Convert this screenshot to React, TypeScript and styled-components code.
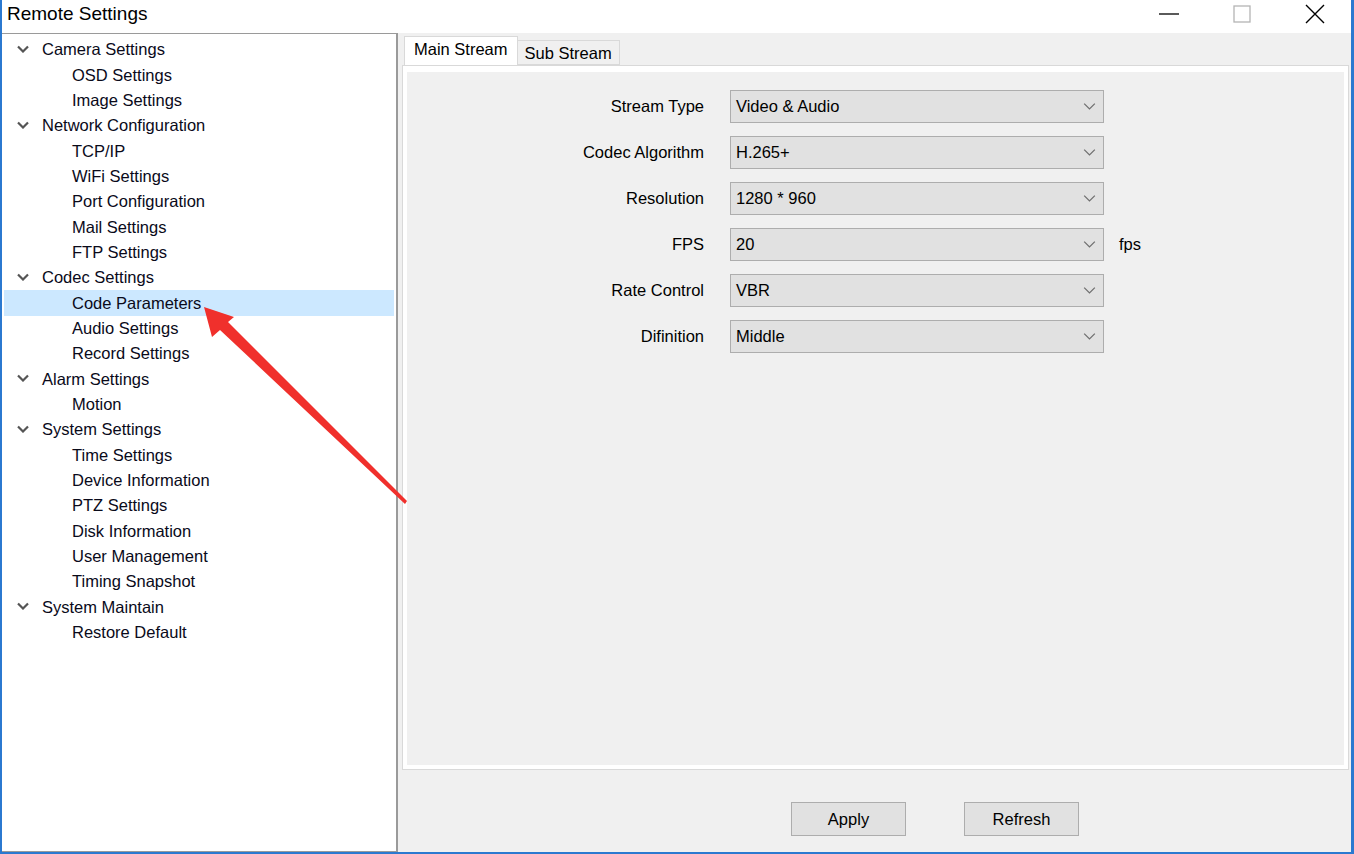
import React from 'react';
import styled, { createGlobalStyle } from 'styled-components';

const GlobalStyle = createGlobalStyle`
  html, body {
    margin: 0;
    padding: 0;
    background: #ffffff;
  }
  body {
    font-family: "Liberation Sans", Arial, sans-serif;
    color: #000;
  }
`;

type TreeNode = { label: string; children: string[] };

const tree: TreeNode[] = [
  { label: 'Camera Settings', children: ['OSD Settings', 'Image Settings'] },
  {
    label: 'Network Configuration',
    children: ['TCP/IP', 'WiFi Settings', 'Port Configuration', 'Mail Settings', 'FTP Settings'],
  },
  { label: 'Codec Settings', children: ['Code Parameters', 'Audio Settings', 'Record Settings'] },
  { label: 'Alarm Settings', children: ['Motion'] },
  {
    label: 'System Settings',
    children: [
      'Time Settings',
      'Device Information',
      'PTZ Settings',
      'Disk Information',
      'User Management',
      'Timing Snapshot',
    ],
  },
  { label: 'System Maintain', children: ['Restore Default'] },
];

const fields = [
  { label: 'Stream Type', value: 'Video & Audio' },
  { label: 'Codec Algorithm', value: 'H.265+' },
  { label: 'Resolution', value: '1280 * 960' },
  { label: 'FPS', value: '20', unit: 'fps' },
  { label: 'Rate Control', value: 'VBR' },
  { label: 'Difinition', value: 'Middle' },
];

const SELECTED = 'Code Parameters';

const Chevron = ({ color, size }: { color: string; size: number }) => (
  <svg width={size} height={size / 2 + 2} viewBox="0 0 12 8">
    <path d="M1 1.5 L6 6.5 L11 1.5" fill="none" stroke={color} strokeWidth={size > 12 ? 1.2 : 2.2} />
  </svg>
);

const App = () => {
  return (
    <>
      <GlobalStyle />
      <Window>
        <TitleBar>
          <Title>Remote Settings</Title>
          <Controls>
            <ControlButton>
              <svg width="22" height="4" viewBox="0 0 22 4">
                <line x1="1" y1="2" x2="21" y2="2" stroke="#000" strokeWidth="1.3" />
              </svg>
            </ControlButton>
            <ControlButton>
              <svg width="18" height="18" viewBox="0 0 18 18">
                <rect x="1" y="1" width="16" height="16" fill="none" stroke="#b4b4b4" strokeWidth="1.3" />
              </svg>
            </ControlButton>
            <ControlButton>
              <svg width="20" height="20" viewBox="0 0 20 20">
                <path d="M1 1 L19 19 M19 1 L1 19" stroke="#000" strokeWidth="1.4" />
              </svg>
            </ControlButton>
          </Controls>
        </TitleBar>

        <Body>
          <TreePanel>
            {tree.map((group) => (
              <React.Fragment key={group.label}>
                <TreeRow>
                  <Expander>
                    <Chevron color="#555" size={12} />
                  </Expander>
                  <TreeText>{group.label}</TreeText>
                </TreeRow>
                {group.children.map((child) => (
                  <TreeRow key={child} $selected={child === SELECTED} $child>
                    <TreeText>{child}</TreeText>
                  </TreeRow>
                ))}
              </React.Fragment>
            ))}
          </TreePanel>

          <Content>
            <TabBar>
              <Tab $active>Main Stream</Tab>
              <Tab>Sub Stream</Tab>
            </TabBar>
            <Pane>
              <PaneInner>
                <Form>
                  {fields.map((f) => (
                    <React.Fragment key={f.label}>
                      <Label>{f.label}</Label>
                      <Select>
                        <span>{f.value}</span>
                        <Chevron color="#6f6f6f" size={13} />
                      </Select>
                      <Unit>{f.unit ?? ''}</Unit>
                    </React.Fragment>
                  ))}
                </Form>
              </PaneInner>
            </Pane>
            <Footer>
              <Button>Apply</Button>
              <Button>Refresh</Button>
            </Footer>
          </Content>
        </Body>

        <Annotation viewBox="0 0 1354 854" width="1354" height="854">
          <polygon
            points="204,307 234,317 228,322 407,501 405,504 220,330 212,337"
            fill="#f0302c"
          />
        </Annotation>
      </Window>
    </>
  );
};

export default App;

const Window = styled.div`
  position: relative;
  width: 1354px;
  height: 854px;
  box-sizing: border-box;
  border-left: 2px solid #2b79d0;
  border-right: 3px solid #2b79d0;
  border-bottom: 2px solid #2b79d0;
  display: flex;
  flex-direction: column;
  overflow: hidden;
`;

const TitleBar = styled.div`
  height: 33px;
  background: #ffffff;
  display: flex;
  align-items: center;
  justify-content: space-between;
  flex-shrink: 0;
`;

const Title = styled.div`
  font-size: 19px;
  padding-left: 5px;
  padding-bottom: 5px;
  color: #000;
`;

const Controls = styled.div`
  display: flex;
  align-items: center;
  height: 100%;
  padding-right: 0;
`;

const ControlButton = styled.div`
  width: 73px;
  height: 100%;
  display: flex;
  align-items: center;
  justify-content: center;
  padding-bottom: 6px;
  box-sizing: border-box;
`;

const Body = styled.div`
  flex: 1;
  display: flex;
  background: #f0f0f0;
  min-height: 0;
`;

const TreePanel = styled.div`
  width: 396px;
  flex-shrink: 0;
  box-sizing: border-box;
  background: #ffffff;
  border-top: 1px solid #9a9a9a;
  border-right: 2px solid #9a9a9a;
  border-bottom: 1px solid #9a9a9a;
  padding: 3px 2px 0 2px;
`;

const TreeRow = styled.div<{ $child?: boolean; $selected?: boolean }>`
  height: 25.35px;
  display: flex;
  align-items: center;
  padding-left: ${(p) => (p.$child ? '68px' : '13px')};
  background: ${(p) => (p.$selected ? '#cce8ff' : 'transparent')};
  box-sizing: border-box;
`;

const Expander = styled.span`
  width: 25px;
  display: flex;
  align-items: center;
  padding-bottom: 2px;
`;

const TreeText = styled.span`
  font-size: 16.5px;
  white-space: nowrap;
  color: #0a0a1a;
`;

const Content = styled.div`
  flex: 1;
  display: flex;
  flex-direction: column;
  padding: 4px 2px 0 4px;
  min-width: 0;
`;

const TabBar = styled.div`
  display: flex;
  align-items: flex-end;
  height: 28px;
  padding-left: 2px;
  position: relative;
  z-index: 1;
`;

const Tab = styled.div<{ $active?: boolean }>`
  height: ${(p) => (p.$active ? '29px' : '25px')};
  box-sizing: border-box;
  padding: ${(p) => (p.$active ? '3px 9px 0 9px' : '3px 7px 0 7px')};
  font-size: 16.5px;
  background: ${(p) => (p.$active ? '#ffffff' : '#f0f0f0')};
  border: 1px solid #d9d9d9;
  border-bottom: ${(p) => (p.$active ? 'none' : '1px solid #d9d9d9')};
  border-left: ${(p) => (p.$active ? '1px solid #d9d9d9' : 'none')};
  white-space: nowrap;
`;

const Pane = styled.div`
  height: 705px;
  box-sizing: border-box;
  border: 1px solid #d9d9d9;
  background: #ffffff;
  padding: 6px 4px 4px 4px;
  display: flex;
`;

const PaneInner = styled.div`
  flex: 1;
  background: #f0f0f0;
  padding-top: 18px;
`;

const Form = styled.div`
  display: grid;
  grid-template-columns: 297px 374px auto;
  column-gap: 26px;
  row-gap: 13px;
  align-items: center;
`;

const Label = styled.div`
  font-size: 16.5px;
  text-align: right;
  padding-bottom: 1px;
  white-space: nowrap;
`;

const Select = styled.div`
  height: 33px;
  box-sizing: border-box;
  background: #e1e1e1;
  border: 1px solid #adadad;
  display: flex;
  align-items: center;
  justify-content: space-between;
  padding: 0 7px 0 5px;
  font-size: 16.5px;
`;

const Unit = styled.div`
  font-size: 16.5px;
  margin-left: -11px;
  padding-bottom: 1px;
`;

const Footer = styled.div`
  flex: 1;
  display: flex;
  align-items: flex-start;
  padding-top: 32px;
  padding-left: 389px;
  gap: 58px;
`;

const Button = styled.div`
  width: 115px;
  height: 34px;
  box-sizing: border-box;
  background: #e1e1e1;
  border: 1px solid #adadad;
  display: flex;
  align-items: center;
  justify-content: center;
  font-size: 16.5px;
`;

const Annotation = styled.svg`
  position: absolute;
  left: -2px;
  top: 0;
  pointer-events: none;
`;
